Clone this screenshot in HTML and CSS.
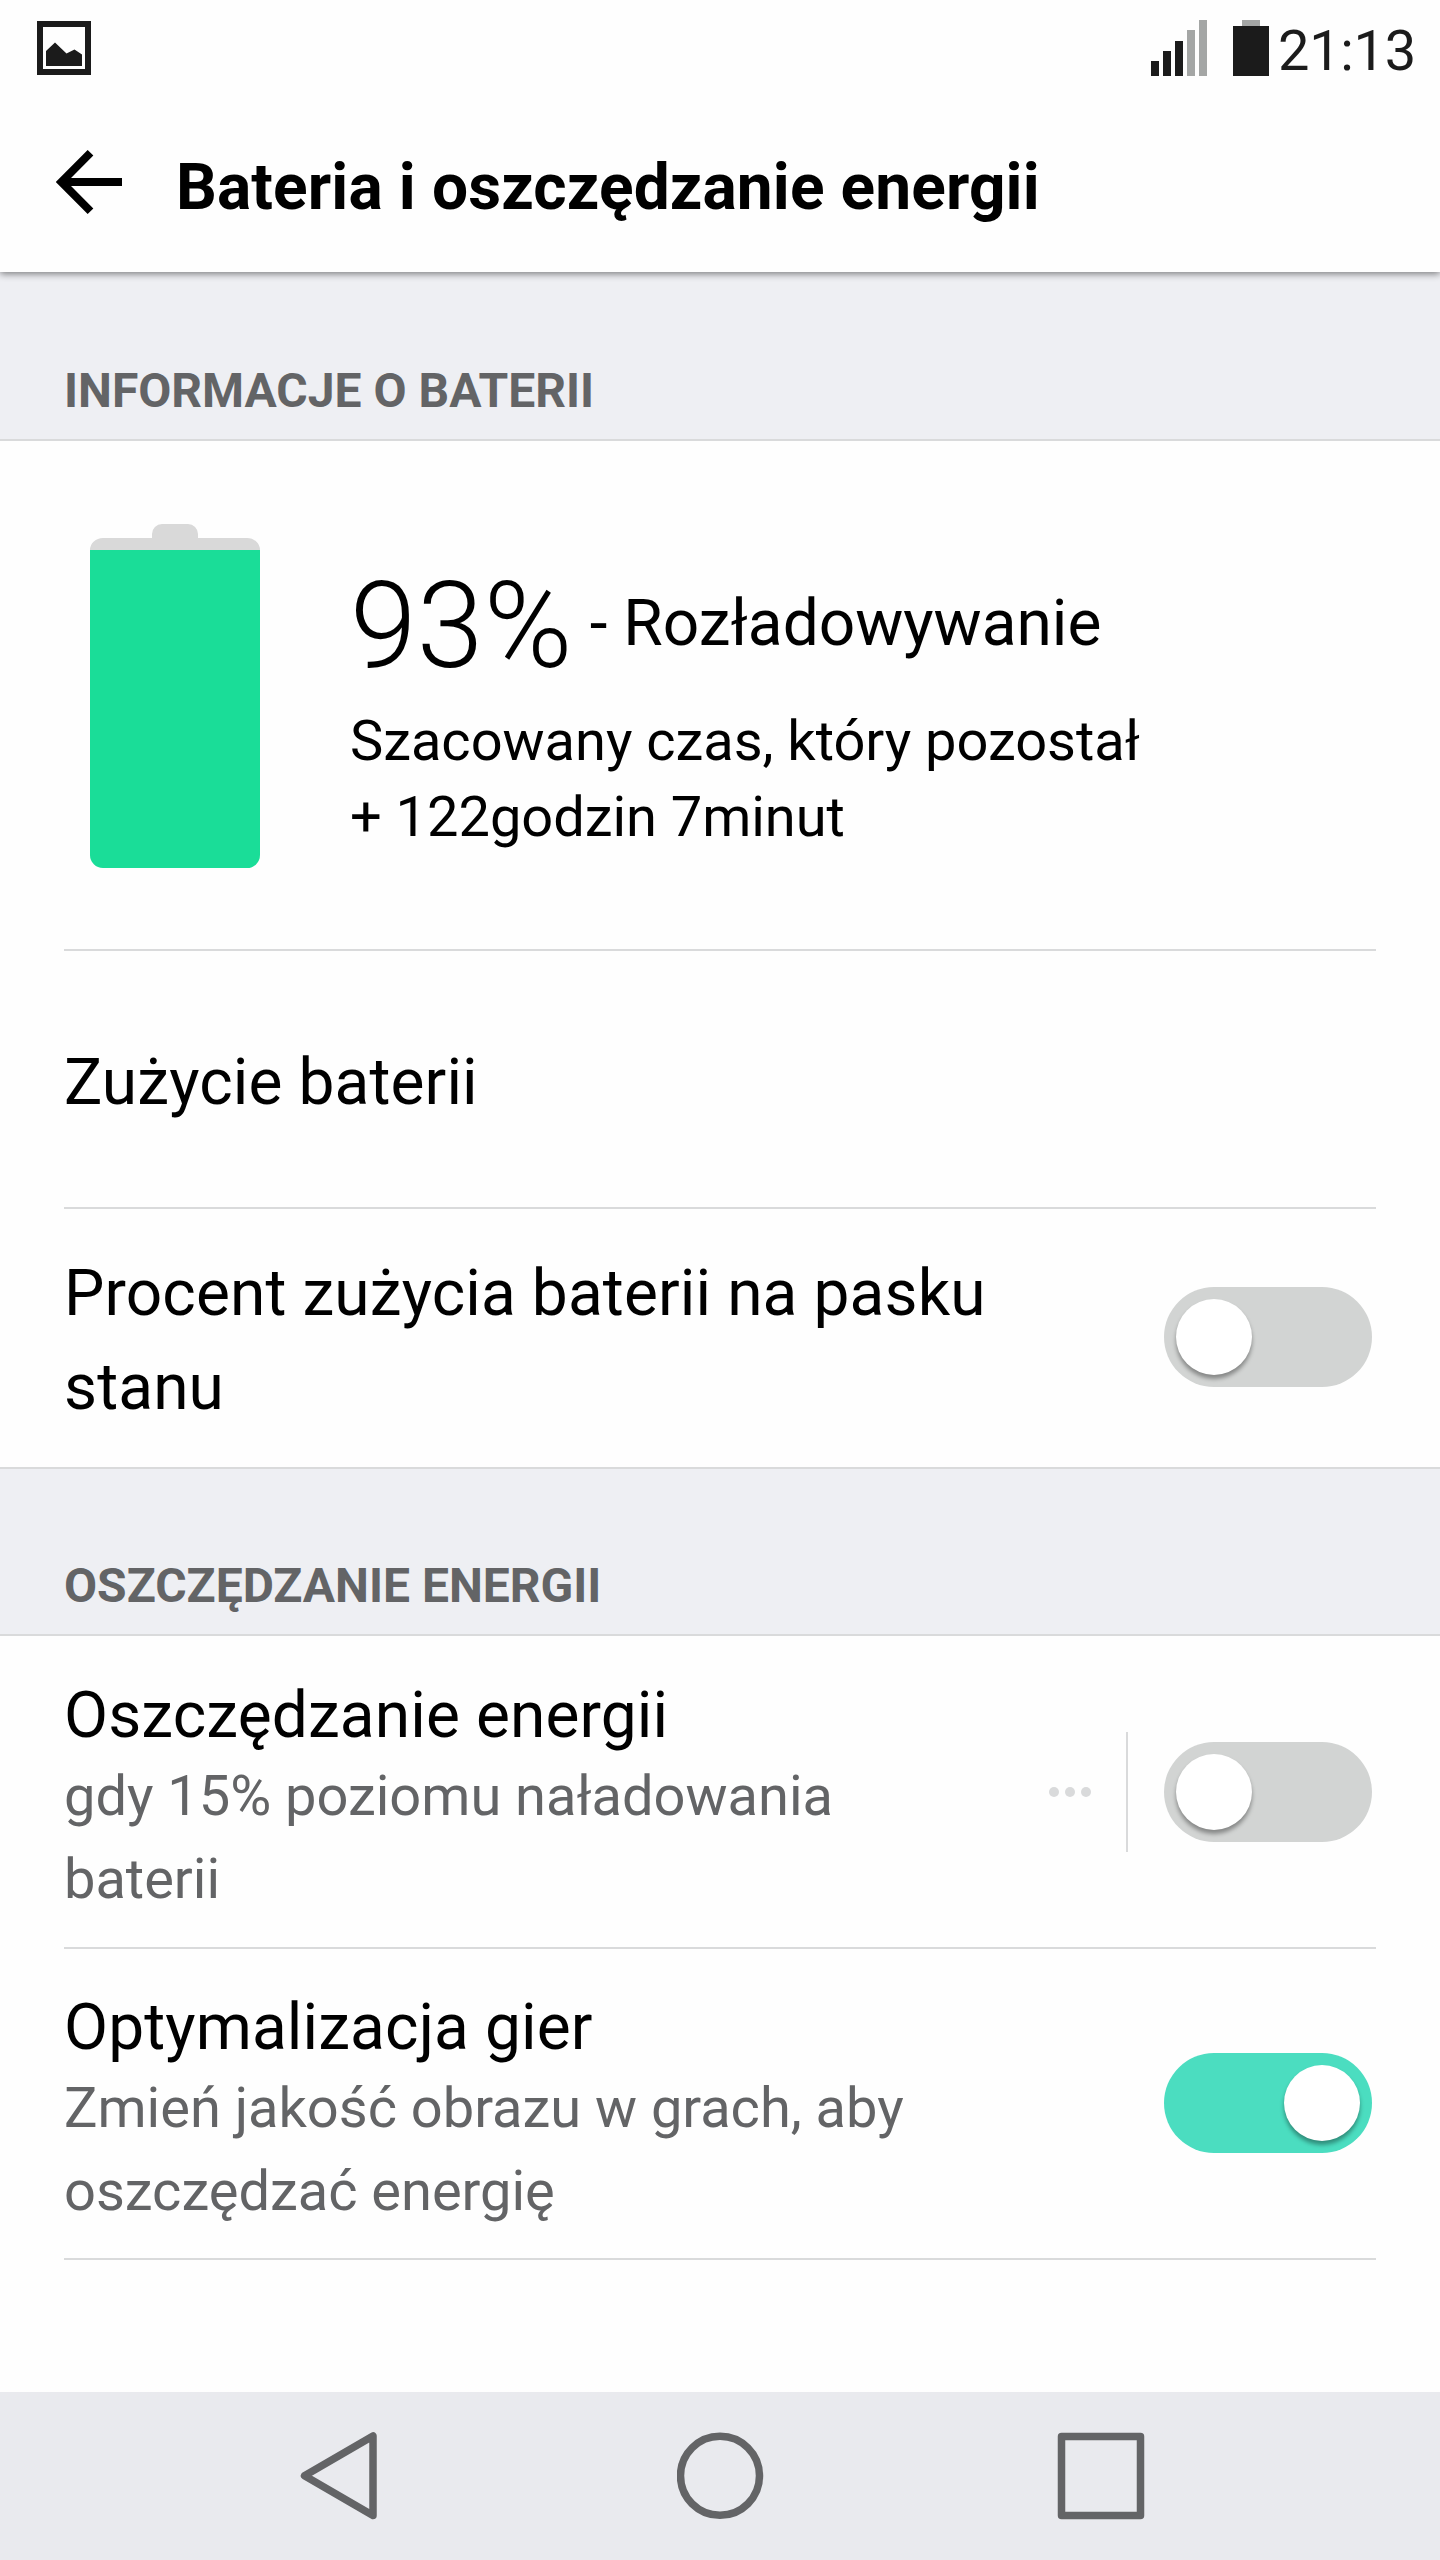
FILE: index.html
```html
<!DOCTYPE html>
<html lang="pl">
<head>
  <meta charset="UTF-8" />
  <title>Bateria i oszczędzanie energii</title>
  <link rel="stylesheet" href="styles.css">
</head>
<body>
<div class="statusBar">
  <svg class="pictureIcon" width="54" height="54" viewBox="0 0 54 54">
    <path d="M0 0h54v54H0zM6 6v42h42V6z" fill="#1b1b1b" fill-rule="evenodd" />
    <path d="M9 45V30l9-8.500 11.500 11 8-4 7.500 5V45z" fill="#1b1b1b" />
  </svg>
  <div class="right">
    <svg class="signalIcon" width="56" height="56" viewBox="0 0 56 56" fill="#1b1b1b">
      <rect x="0" y="41" width="8" height="15" />
      <rect x="12" y="31" width="8" height="25" />
      <rect x="24" y="21" width="8" height="35" />
      <rect x="36" y="10" width="8" height="46" fill="#a4a6a5" />
      <rect x="48" y="0" width="8" height="56" fill="#a4a6a5" />
    </svg>
    <svg class="batteryIcon" width="36" height="56" viewBox="0 0 36 56">
      <rect x="9" y="0" width="18" height="6" fill="#a4a6a5" />
      <rect x="0" y="6" width="36" height="50" fill="#1b1b1b" />
    </svg>
    <span class="clock">21:13</span>
  </div>
</div>

<header class="titleBar">
  <svg class="backIcon" width="66" height="64" viewBox="0 0 66 64" fill="none" stroke="#000" stroke-width="8">
    <path d="M66 32H8M34.500 2.800L5.500 32l29 29.200" />
  </svg>
  <h1>Bateria i oszczędzanie energii</h1>
</header>

<main>
  <h2>INFORMACJE O BATERII</h2>
  <section>
    <div class="row batteryInfo">
      <svg class="bigBattery" width="170" height="344" viewBox="0 0 170 344">
        <path d="M0 26a13 12 0 0 1 13-12h49V10a10 10 0 0 1 10-10h26a10 10 0 0 1 10 10v4h49a13 12 0 0 1 13 12z" fill="#d9d9d9" />
        <path d="M0 26h170v305a13 13 0 0 1-13 13H13a13 13 0 0 1-13-13z" fill="#1add98" />
      </svg>
      <div class="batteryText">
        <p class="level"><span class="percent">93%</span><span class="state">- Rozładowywanie</span></p>
        <p class="remaining">Szacowany czas, który pozostał<br>+ 122godzin 7minut</p>
      </div>
    </div>
    <div class="row usage">
      <p class="name">Zużycie baterii</p>
    </div>
    <div class="row percentRow">
      <p class="name">Procent zużycia baterii na pasku<br>stanu</p>
      <div class="switch"><div class="knob"></div></div>
    </div>
  </section>

  <h2 class="second">OSZCZĘDZANIE ENERGII</h2>
  <section class="last">
    <div class="row option">
      <div class="text">
        <p class="name">Oszczędzanie energii</p>
        <p class="desc">gdy 15% poziomu naładowania<br>baterii</p>
      </div>
      <div class="more"><i></i><i></i><i></i></div>
      <div class="switch"><div class="knob"></div></div>
    </div>
    <div class="row option">
      <div class="text">
        <p class="name">Optymalizacja gier</p>
        <p class="desc">Zmień jakość obrazu w grach, aby<br>oszczędzać energię</p>
      </div>
      <div class="switch on"><div class="knob"></div></div>
    </div>
  </section>
</main>

<nav class="navBar">
  <svg width="88" height="88" viewBox="0 0 88 88">
    <path d="M76 4v79.500L7.500 43.800z" />
  </svg>
  <svg width="88" height="88" viewBox="0 0 88 88">
    <circle cx="43" cy="43.800" r="39.500" />
  </svg>
  <svg width="88" height="88" viewBox="0 0 88 88">
    <rect x="4.500" y="4.500" width="79" height="79" />
  </svg>
</nav>
</body>
</html>
```

FILE: styles.css
```css
* { margin: 0; padding: 0; box-sizing: border-box; }
body {
  display: flex;
  flex-direction: column;
  height: 2560px;
  font-family: Roboto, "Noto Sans", sans-serif;
  background-color: #fefefe;
  color: #000;
  overflow: hidden;
}
svg {
  display: block;
  flex-shrink: 0;
}
.statusBar {
  display: flex;
  justify-content: space-between;
  align-items: flex-start;
  height: 100px;
  padding: 20px 20px 0 37px;
}
.statusBar .pictureIcon { margin-top: 1px; }
.statusBar .right {
  display: flex;
}
.batteryIcon { margin-left: 26px; }
.clock {
  width: 142px;
  margin-left: 9px;
  font-size: 56px;
  line-height: 62px;
  letter-spacing: -0.3px;
  white-space: nowrap;
  color: #1b1b1b;
}
.titleBar {
  display: flex;
  align-items: center;
  height: 172px;
  padding: 0 0 8px 56px;
  background-color: #fefefe;
  box-shadow: 0 2px 7px rgba(0, 0, 0, 0.48);
  clip-path: inset(0 0 -12px 0);
  z-index: 1;
}
.titleBar h1 {
  margin: 12px 0 0 54px;
  font-size: 64px;
  line-height: 76px;
  font-weight: 700;
  letter-spacing: 0.12px;
}
h2 {
  display: flex;
  align-items: flex-end;
  height: 169px;
  padding: 0 64px 20px;
  font-size: 48px;
  line-height: 56px;
  font-weight: 700;
  color: #636466;
  background-color: #eeeff3;
  border-bottom: 2px solid #d9dadb;
}
h2.second { height: 167px; }
section {
  padding: 0 64px;
  border-bottom: 2px solid #d9dadb;
}
section.last { border-bottom: none; }
.row {
  display: flex;
  align-items: center;
  border-bottom: 2px solid #d9dadb;
}
.name {
  flex: 1;
  font-size: 64px;
  line-height: 94px;
  letter-spacing: 0.12px;
}
.batteryInfo {
  align-items: flex-start;
  height: 510px;
  padding: 83px 0 0 26px;
}
.batteryText { padding: 36px 0 0 90px; }
.level {
  display: flex;
  height: 143px;
  white-space: nowrap;
}
.percent {
  font-size: 120px;
  line-height: 132px;
  font-weight: 300;
  letter-spacing: 0.3px;
}
.state {
  margin-left: 17px;
  font-size: 64px;
  line-height: 128px;
}
.remaining {
  font-size: 56px;
  line-height: 76px;
  letter-spacing: -0.04px;
}
.usage {
  height: 258px;
  padding-top: 8px;
}
.percentRow {
  height: 258px;
  border-bottom: none;
}
.percentRow .name { padding-top: 6px; }
.percentRow .switch { margin-bottom: 2px; }
.switch {
  flex-shrink: 0;
  width: 208px;
  height: 100px;
  margin-right: 4px;
  padding: 12px;
  border-radius: 50px;
  background-color: #d2d4d3;
}
.knob {
  width: 76px;
  height: 76px;
  border-radius: 50%;
  background-color: #fff;
  box-shadow: 0 4px 4px rgba(0, 0, 0, 0.36);
}
.switch.on {
  margin-bottom: 1px;
  background-color: #4bddc0;
}
.switch.on .knob { margin-left: 108px; }
.option { height: 311px; }
.option:first-child { height: 313px; }
.option .text {
  flex: 1;
  padding-top: 16px;
}
.option .name { line-height: 76px; }
.desc {
  margin-top: 1px;
  font-size: 56px;
  line-height: 83px;
  letter-spacing: -0.02px;
  color: #636466;
}
.more {
  display: flex;
  align-items: center;
  gap: 6px;
  height: 120px;
  margin-right: 36px;
  padding-right: 35px;
  border-right: 2px solid #d9dadb;
}
.more i {
  width: 10px;
  height: 10px;
  border-radius: 50%;
  background-color: #d9dadb;
}
.navBar {
  display: flex;
  justify-content: space-between;
  height: 168px;
  margin-top: auto;
  padding: 40px 295px 0 297px;
  background-color: #e9eaee;
}
.navBar svg {
  fill: none;
  stroke: #636466;
  stroke-width: 7.5;
  stroke-linejoin: round;
}
```
